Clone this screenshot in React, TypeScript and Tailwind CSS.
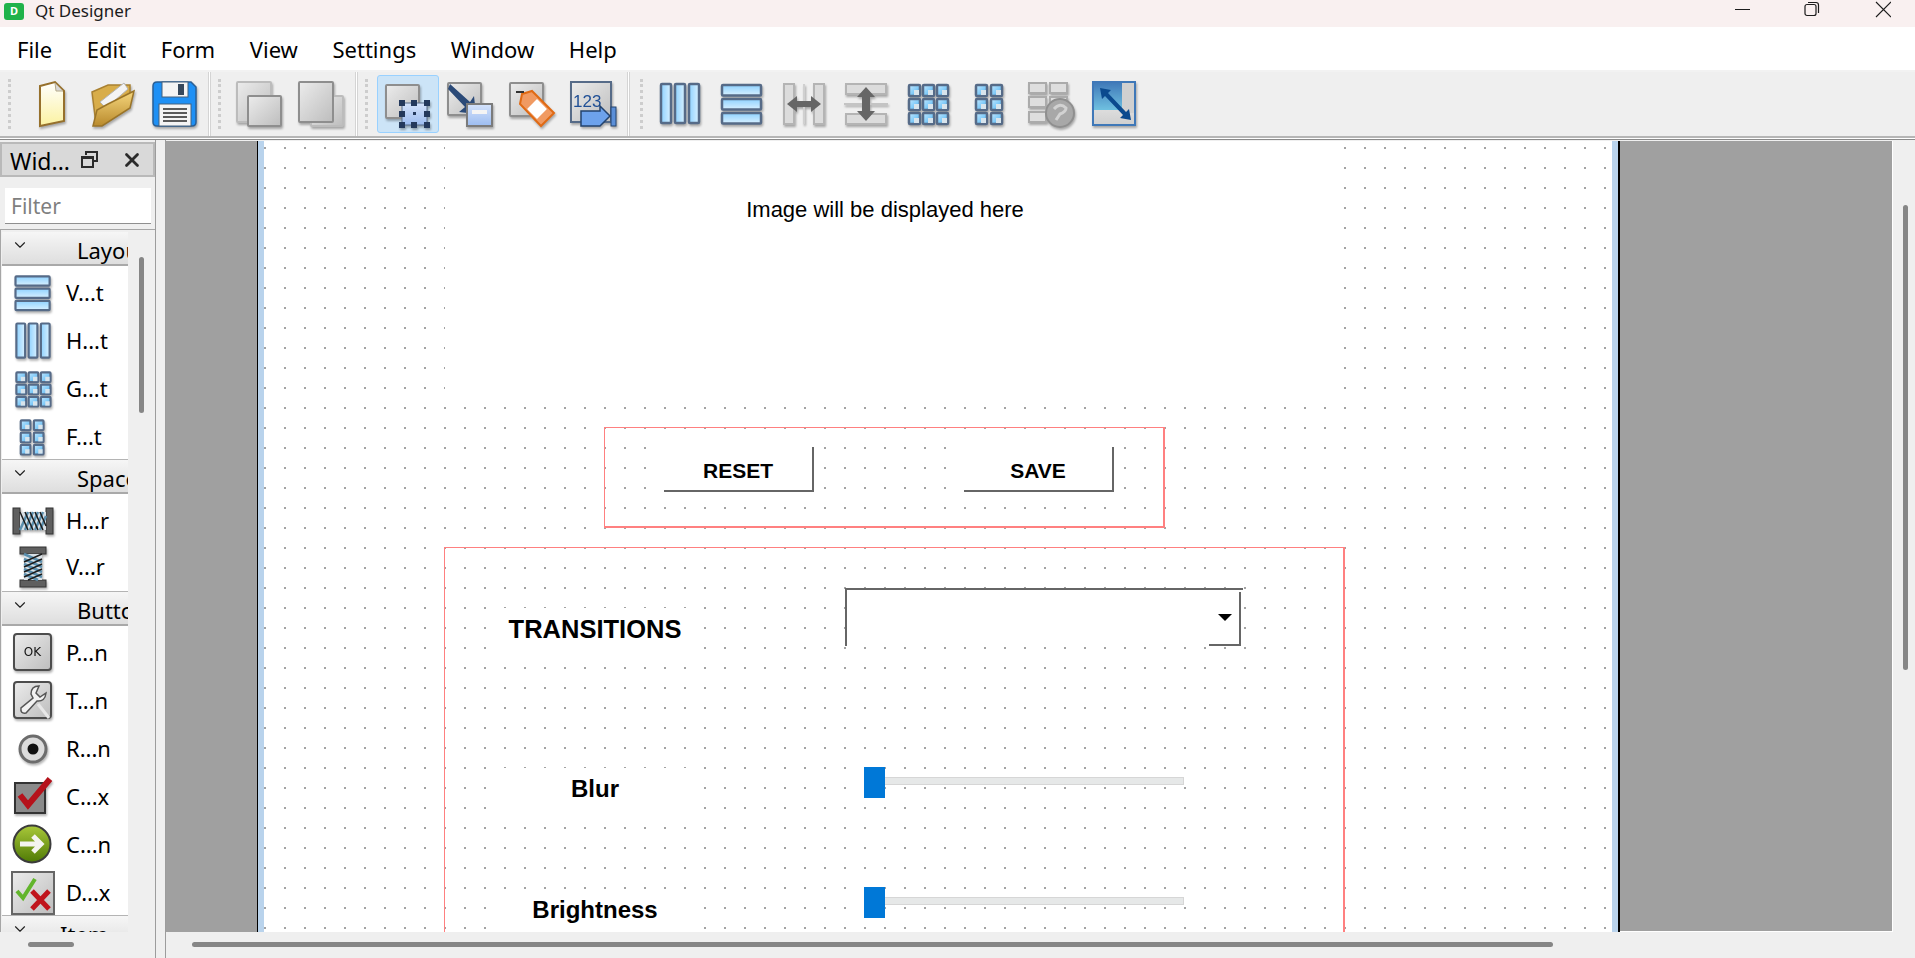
// App.tsx — Qt Designer main window with a form open on the canvas
import type { ReactNode } from "react";
import { ChevronDown, X } from "lucide-react";

// ─── Shared gradients for the toolbar and widget box icons ─────────────────────

function IconDefs() {
  return (
    <svg className="absolute w-0 h-0" aria-hidden="true">
      <defs>
        <linearGradient id="blueV" x1="0" y1="0" x2="0" y2="1">
          <stop offset="0" stopColor="#8fd2ff" />
          <stop offset="1" stopColor="#d8f0ff" />
        </linearGradient>
        <linearGradient id="blueH" x1="0" y1="0" x2="1" y2="0">
          <stop offset="0" stopColor="#8fd2ff" />
          <stop offset="1" stopColor="#d8f0ff" />
        </linearGradient>
        <linearGradient id="blueD" x1="0" y1="0" x2="1" y2="1">
          <stop offset="0" stopColor="#c4e8ff" />
          <stop offset="0.5" stopColor="#86cdf9" />
          <stop offset="1" stopColor="#4aa3df" />
        </linearGradient>
        <linearGradient id="grayBox" x1="0" y1="0" x2="1" y2="1">
          <stop offset="0" stopColor="#ececec" />
          <stop offset="1" stopColor="#bdbdbd" />
        </linearGradient>
        <linearGradient id="paleBlue" x1="0" y1="0" x2="0" y2="1">
          <stop offset="0" stopColor="#d5e3fb" />
          <stop offset="1" stopColor="#9cbcf0" />
        </linearGradient>
        <linearGradient id="paper" x1="0" y1="0" x2="0" y2="1">
          <stop offset="0" stopColor="#ffffff" />
          <stop offset="1" stopColor="#fbf2a0" />
        </linearGradient>
        <linearGradient id="folder" x1="0" y1="0" x2="0" y2="1">
          <stop offset="0" stopColor="#f6d77e" />
          <stop offset="1" stopColor="#b98a2c" />
        </linearGradient>
        <linearGradient id="greenBall" x1="0" y1="0" x2="0" y2="1">
          <stop offset="0" stopColor="#a9c83a" />
          <stop offset="1" stopColor="#4f7a05" />
        </linearGradient>
        <linearGradient id="adjust" x1="0" y1="0" x2="0" y2="1">
          <stop offset="0" stopColor="#3f78b8" />
          <stop offset="0.65" stopColor="#6fc0e0" />
          <stop offset="0.66" stopColor="#dcdcdc" />
          <stop offset="1" stopColor="#cfcfcf" />
        </linearGradient>
      </defs>
    </svg>
  );
}

function Icon({ size = 48, children }: { size?: number; children: ReactNode }) {
  return (
    <svg
      width={size}
      height={size}
      viewBox="0 0 48 48"
      className="shrink-0 drop-shadow-[1px_2px_1px_rgba(0,0,0,0.3)]"
    >
      {children}
    </svg>
  );
}

const OUTLINE = "#566b88";

// ─── File icons ────────────────────────────────────────────────────────────────

const NewFileIcon = () => (
  <Icon>
    <path d="M14 6 L29 2 L38 11 L38 41 L14 46 Z" fill="url(#paper)" stroke="#96702c" strokeWidth="2" />
    <path d="M29 3 L30 11 L37 11" fill="#d9d9d9" stroke="#b4a888" strokeWidth="1" />
  </Icon>
);

const OpenFileIcon = () => (
  <Icon>
    <path d="M4 12 L20 5 L42 5 L42 26 L8 44 Z" fill="#d8ad4a" stroke="#a98132" strokeWidth="1.5" />
    <path d="M12 22 L36 3 L40 9 L18 28 Z" fill="#f4f4f4" stroke="#b5b5b5" strokeWidth="1" />
    <path d="M5 46 L9 30 L20 24 L46 11 L42 28 L14 46 Z" fill="url(#folder)" stroke="#9a7428" strokeWidth="1.5" />
  </Icon>
);

const SaveIcon = () => (
  <Icon>
    <path d="M3 6 Q3 2 7 2 L41 2 L46 7 L46 42 Q46 46 42 46 L7 46 Q3 46 3 42 Z" fill="#1e90f5" stroke="#2a5f95" strokeWidth="1.5" />
    <rect x="12" y="2" width="26" height="15" fill="#f4f4f4" stroke="#44607c" />
    <rect x="28" y="4" width="6" height="11" fill="#36485c" />
    <rect x="9" y="24" width="32" height="22" fill="#f4f4f4" stroke="#44607c" />
    <path d="M13 29 H37 M13 33 H37 M13 37 H37 M13 41 H37" stroke="#5a5a5a" strokeWidth="2" />
  </Icon>
);

// ─── Form editing mode icons ───────────────────────────────────────────────────

function GrayBox({ x, y, w, h, light = false }: { x: number; y: number; w: number; h: number; light?: boolean }) {
  return (
    <rect
      x={x}
      y={y}
      width={w}
      height={h}
      rx="1"
      fill="url(#grayBox)"
      stroke={light ? "#bcbcbc" : "#8e8e8e"}
      strokeWidth="2"
    />
  );
}

const BringFrontIcon = () => (
  <Icon>
    <GrayBox x={2} y={2} w={34} h={40} light />
    <GrayBox x={13} y={16} w={33} h={30} />
  </Icon>
);

const SendBackIcon = () => (
  <Icon>
    <GrayBox x={14} y={16} w={32} h={30} light />
    <GrayBox x={2} y={2} w={34} h={40} />
  </Icon>
);

function EditWidgetsIcon() {
  const handles = [
    [18, 23], [30, 23], [43, 23],
    [18, 34], [43, 34],
    [18, 45], [30, 45], [43, 45],
  ];
  return (
    <Icon>
      <GrayBox x={2} y={5} w={33} h={33} />
      <rect x="18" y="23" width="25" height="22" fill="url(#paleBlue)" stroke={OUTLINE} />
      {handles.map(([x, y], i) => (
        <rect key={i} x={x - 3} y={y - 3} width="6" height="6" fill="#24395c" />
      ))}
      <rect x="29" y="32" width="3" height="3" fill="#24395c" />
    </Icon>
  );
}

const SignalsIcon = () => (
  <Icon>
    <GrayBox x={2} y={3} w={33} h={32} />
    <path d="M4 4 L24 22 L28 16 L30 34 L13 32 L19 27 L2 9 Z" fill="#2b4a78" />
    <rect x="21" y="24" width="25" height="22" fill="url(#paleBlue)" stroke="#7b7b7b" strokeWidth="2" />
    <rect x="26" y="30" width="15" height="4" fill="#f4f4f4" />
  </Icon>
);

const BuddiesIcon = () => (
  <Icon>
    <GrayBox x={2} y={3} w={33} h={33} />
    <path d="M14 14 L24 11 L46 33 L33 46 L12 24 Z" fill="#f09a62" stroke="#e06a14" strokeWidth="2" />
    <rect x="22" y="22" width="14" height="14" transform="rotate(45 29 29)" fill="#ffffff" />
    <path d="M8 12 H16" stroke="#333" strokeWidth="2" />
  </Icon>
);

const TabOrderIcon = () => (
  <Icon>
    <rect x="1" y="2" width="40" height="40" fill="url(#grayBox)" stroke={OUTLINE} strokeWidth="2" />
    <text x="3" y="27" fontFamily="Liberation Sans, sans-serif" fontSize="17" fill="#1f4f96">123</text>
    <path d="M11 31 H30 V26 L40 36 L30 46 H11 Z" fill="#6da2ec" stroke="#23436e" strokeWidth="1.5" />
    <rect x="41" y="27" width="5" height="19" fill="#5b8fd8" stroke="#23436e" />
  </Icon>
);

// ─── Layout icons, used in the toolbar and in the widget box ───────────────────

function VLayoutIcon({ size = 48 }: { size?: number }) {
  return (
    <Icon size={size}>
      {[5, 19, 33].map((y) => (
        <rect key={y} x="4" y={y} width="39" height="10.5" rx="1" fill="url(#blueV)" stroke={OUTLINE} strokeWidth="2.5" />
      ))}
    </Icon>
  );
}

function HLayoutIcon({ size = 48 }: { size?: number }) {
  return (
    <Icon size={size}>
      {[5, 19, 33].map((x) => (
        <rect key={x} x={x} y="4" width="10" height="39" rx="1" fill="url(#blueH)" stroke={OUTLINE} strokeWidth="2.5" />
      ))}
    </Icon>
  );
}

function Cell({ x, y }: { x: number; y: number }) {
  return (
    <g>
      <rect x={x} y={y} width="11" height="11" rx="1" fill="url(#blueD)" stroke={OUTLINE} strokeWidth="2.5" />
      <rect x={x + 5} y={y + 5} width="5" height="5" fill="#d8e4ec" />
    </g>
  );
}

function GridIcon({ size = 48 }: { size?: number }) {
  const pos = [5, 19, 33];
  return (
    <Icon size={size}>
      {pos.map((y) => pos.map((x) => <Cell key={`${x}-${y}`} x={x} y={y} />))}
    </Icon>
  );
}

function FormLayoutIcon({ size = 48 }: { size?: number }) {
  const pos = [5, 19, 33];
  return (
    <Icon size={size}>
      {pos.map((y) => [10, 25].map((x) => <Cell key={`${x}-${y}`} x={x} y={y} />))}
    </Icon>
  );
}

const HSplitterIcon = () => (
  <Icon>
    <rect x="4" y="4" width="10" height="40" fill="#dcdcdc" stroke="#b4b4b4" strokeWidth="2" />
    <rect x="34" y="4" width="10" height="40" fill="#dcdcdc" stroke="#b4b4b4" strokeWidth="2" />
    <path d="M24 4 V44" stroke="#d0d0d0" strokeWidth="2" />
    <path d="M7 24 L17 16 V21 H31 V16 L41 24 L31 32 V27 H17 V32 Z" fill="#666" />
  </Icon>
);

const VSplitterIcon = () => (
  <Icon>
    <rect x="4" y="4" width="40" height="10" fill="#dcdcdc" stroke="#b4b4b4" strokeWidth="2" />
    <rect x="4" y="34" width="40" height="10" fill="#dcdcdc" stroke="#b4b4b4" strokeWidth="2" />
    <path d="M2 24 H46" stroke="#c4c4c4" strokeWidth="2" />
    <path d="M24 7 L33 17 H28 V31 H33 L24 41 L15 31 H20 V17 H15 Z" fill="#666" />
  </Icon>
);

const BreakLayoutIcon = () => (
  <Icon>
    {[3, 17, 32].map((y) => (
      <g key={y}>
        <rect x="1" y={y} width="17" height="10" fill="#dedede" stroke="#ababab" strokeWidth="2" />
        <rect x="22" y={y} width="17" height="10" fill="#dedede" stroke="#ababab" strokeWidth="2" />
      </g>
    ))}
    <circle cx="32" cy="33" r="14" fill="#a8a8a8" stroke="#8f8f8f" strokeWidth="2" />
    <path d="M26 29 Q32 22 38 28 Q38 32 32 34 L28 40" fill="none" stroke="#d2d2d2" strokeWidth="3" />
  </Icon>
);

const AdjustSizeIcon = () => (
  <Icon>
    <rect x="3" y="2" width="42" height="43" fill="url(#adjust)" stroke="#3f78b8" strokeWidth="2" />
    <rect x="32" y="3" width="12" height="30" fill="#d0d0d0" />
    <path d="M10 8 L21 10 L18 13 L36 32 L39 29 L41 40 L30 38 L33 35 L15 16 L12 19 Z" fill="#0b4a8e" />
  </Icon>
);

// ─── Widget box icons ──────────────────────────────────────────────────────────

function CoilIcon({ vertical = false }: { vertical?: boolean }) {
  return (
    <svg width="42" height="42" viewBox="0 0 42 42" className="shrink-0 drop-shadow-[1px_2px_1px_rgba(0,0,0,0.3)]">
      <g transform={vertical ? "rotate(90 21 21)" : undefined}>
        <rect x="1" y="8" width="7" height="26" fill="#5f5f5f" stroke="#333" />
        <rect x="34" y="8" width="7" height="26" fill="#5f5f5f" stroke="#333" />
        <rect x="8" y="12" width="26" height="18" fill="#d8e0e6" />
        <path d="M8 30 L16 12 M13 30 L21 12 M18 30 L26 12 M23 30 L31 12 M28 30 L34 16" stroke="#5a8fae" strokeWidth="2.5" />
        <path d="M8 12 L16 30 M13 12 L21 30 M18 12 L26 30 M23 12 L31 30 M28 12 L34 26" stroke="#1c1c1c" strokeWidth="1.5" />
      </g>
    </svg>
  );
}

const PushButtonIcon = () => (
  <svg width="42" height="42" viewBox="0 0 42 42" className="shrink-0 drop-shadow-[1px_2px_1px_rgba(0,0,0,0.3)]">
    <rect x="2" y="2" width="37" height="36" rx="3" fill="url(#grayBox)" stroke="#4d4d4d" strokeWidth="2" />
    <text x="20.5" y="24" textAnchor="middle" fontFamily="DejaVu Sans, sans-serif" fontSize="12" fill="#111">OK</text>
  </svg>
);

const ToolButtonIcon = () => (
  <svg width="42" height="42" viewBox="0 0 42 42" className="shrink-0 drop-shadow-[1px_2px_1px_rgba(0,0,0,0.3)]">
    <rect x="2" y="2" width="37" height="36" rx="3" fill="url(#grayBox)" stroke="#4d4d4d" strokeWidth="2" />
    <path d="M27 6 Q19 6 19 14 L21 18 L9 28 Q8 34 14 33 L25 21 Q33 22 34 13 L28 17 L24 13 Z" fill="#f2f2f2" stroke="#555" strokeWidth="1.5" />
    <path d="M26 24 L37 38" stroke="#e8e8e8" strokeWidth="3" />
  </svg>
);

const RadioIcon = () => (
  <svg width="42" height="42" viewBox="0 0 42 42" className="shrink-0 drop-shadow-[1px_2px_1px_rgba(0,0,0,0.3)]">
    <circle cx="21" cy="21" r="13" fill="#dcdcdc" stroke="#6c6c6c" strokeWidth="3" />
    <circle cx="21" cy="21" r="5.5" fill="#111" />
  </svg>
);

const CheckBoxIcon = () => (
  <svg width="42" height="42" viewBox="0 0 42 42" className="shrink-0 drop-shadow-[1px_2px_1px_rgba(0,0,0,0.3)]">
    <rect x="3" y="7" width="30" height="30" fill="#8a8a8a" stroke="#333" strokeWidth="2" />
    <path d="M8 19 L16 29 L38 3" fill="none" stroke="#b5121b" strokeWidth="6" />
  </svg>
);

const CommandLinkIcon = () => (
  <svg width="42" height="42" viewBox="0 0 42 42" className="shrink-0">
    <circle cx="20" cy="20" r="18.5" fill="url(#greenBall)" stroke="#3b3b3b" strokeWidth="2" />
    <path d="M8 20 H28 M21 12 L29 20 L21 28" fill="none" stroke="#f4f4f0" strokeWidth="5" />
  </svg>
);

const DialogBoxIcon = () => (
  <svg width="44" height="44" viewBox="0 0 44 44" className="shrink-0">
    <rect x="1" y="1" width="42" height="42" fill="url(#grayBox)" stroke="#666" strokeWidth="2" />
    <path d="M6 20 L12 27 L24 8" fill="none" stroke="#62b52c" strokeWidth="4" />
    <path d="M21 20 L38 38 M38 20 L21 38" stroke="#c0141c" strokeWidth="5" />
  </svg>
);

// ─── Title bar and menu ────────────────────────────────────────────────────────

const MENUS = ["File", "Edit", "Form", "View", "Settings", "Window", "Help"];

function TitleBar() {
  return (
    <div className="h-[27px] bg-[#f9f0f0] flex items-center shrink-0">
      <div className="ml-[4px] w-[20px] h-[17px] mb-[4px] rounded-[3px] bg-[#20b24a] text-white text-[11px] font-bold flex items-center justify-center">
        D
      </div>
      <span className="ml-[11px] mb-[5px] text-[17px] text-[#1c1c1c]">Qt Designer</span>
      <div className="ml-auto flex items-start h-full pr-[24px] text-[#1c1c1c]">
        <svg width="16" height="20" viewBox="0 0 16 20">
          <path d="M0 9.5 H15" stroke="currentColor" strokeWidth="1" />
        </svg>
        <svg width="16" height="20" viewBox="0 0 16 20" className="ml-[53px]">
          <rect x="1" y="4.5" width="11" height="11" rx="2" fill="none" stroke="currentColor" strokeWidth="1.2" />
          <path d="M4 2.5 H12 Q14.5 2.5 14.5 5 V13" fill="none" stroke="currentColor" strokeWidth="1.2" />
        </svg>
        <svg width="16" height="20" viewBox="0 0 16 20" className="ml-[55px]">
          <path d="M1 2 L16 17 M16 2 L1 17" stroke="currentColor" strokeWidth="1.1" />
        </svg>
      </div>
    </div>
  );
}

function MenuBar() {
  return (
    <div className="h-[45px] bg-white border-b-2 border-[#f2f2f2] flex items-center gap-[34.6px] pl-[17px] pt-[2px] text-[22px] text-black shrink-0">
      {MENUS.map((m) => (
        <span key={m}>{m}</span>
      ))}
    </div>
  );
}

// ─── Toolbar ───────────────────────────────────────────────────────────────────

function ToolSlot({ active = false, children }: { active?: boolean; children: ReactNode }) {
  return (
    <div
      className={
        active
          ? "w-[62px] h-[58px] flex items-center justify-center rounded-[3px] bg-[#cce4f7] border border-[#99d1ff]"
          : "w-[62px] h-[58px] flex items-center justify-center"
      }
    >
      {children}
    </div>
  );
}

const Grip = () => <div className="w-[3px] h-[50px] border-l-[3px] border-dotted border-[#cdcdcd]" />;
const ToolDivider = () => <div className="w-[3px] h-full bg-white border-x border-[#d4d4d4]" />;

function ToolBar() {
  return (
    <div className="h-[64px] bg-[#efefef] flex items-center shrink-0">
      <div className="flex items-center pl-[8px] pr-[3px]">
        <Grip />
        <div className="flex ml-[8px]">
          <ToolSlot><NewFileIcon /></ToolSlot>
          <ToolSlot><OpenFileIcon /></ToolSlot>
          <ToolSlot><SaveIcon /></ToolSlot>
        </div>
      </div>
      <ToolDivider />
      <div className="flex items-center pl-[7px] pr-[3px]">
        <Grip />
        <div className="flex ml-[7px]">
          <ToolSlot><BringFrontIcon /></ToolSlot>
          <ToolSlot><SendBackIcon /></ToolSlot>
        </div>
      </div>
      <ToolDivider />
      <div className="flex items-center pl-[7px] pr-[2px]">
        <Grip />
        <div className="flex ml-[9px]">
          <ToolSlot active><EditWidgetsIcon /></ToolSlot>
          <ToolSlot><SignalsIcon /></ToolSlot>
          <ToolSlot><BuddiesIcon /></ToolSlot>
          <ToolSlot><TabOrderIcon /></ToolSlot>
        </div>
      </div>
      <ToolDivider />
      <div className="flex items-center pl-[10px]">
        <Grip />
        <div className="flex ml-[6px]">
          <ToolSlot><HLayoutIcon /></ToolSlot>
          <ToolSlot><VLayoutIcon /></ToolSlot>
          <ToolSlot><HSplitterIcon /></ToolSlot>
          <ToolSlot><VSplitterIcon /></ToolSlot>
          <ToolSlot><GridIcon /></ToolSlot>
          <ToolSlot><FormLayoutIcon /></ToolSlot>
          <ToolSlot><BreakLayoutIcon /></ToolSlot>
          <ToolSlot><AdjustSizeIcon /></ToolSlot>
        </div>
      </div>
    </div>
  );
}

// ─── Widget box dock ───────────────────────────────────────────────────────────

function SectionHeader({ title, pad = "pl-[75px]" }: { title: string; pad?: string }) {
  return (
    <div className="relative h-[34px] shrink-0 flex items-center overflow-hidden whitespace-nowrap bg-gradient-to-b from-[#f6f6f6] to-[#dedede] border-b-2 border-[#a9a9a9]">
      <ChevronDown className="ml-[9px] mb-[6px] shrink-0" size={18} strokeWidth={1.5} color="#222" />
      <span className={`absolute ${pad} pt-[4px] text-[22px] text-black`}>{title}</span>
    </div>
  );
}

function BoxRow({ icon, label, tall = true }: { icon: ReactNode; label: string; tall?: boolean }) {
  return (
    <div className={tall ? "h-[48px] flex items-center" : "h-[46px] flex items-center"}>
      <div className="w-[60px] flex items-center justify-center pl-[2px]">{icon}</div>
      <span className="ml-[4px] pb-[2px] text-[22px] text-black">{label}</span>
    </div>
  );
}

function WidgetBox() {
  return (
    <aside className="w-[166px] shrink-0 bg-[#efefef] border-r border-[#9c9c9c] flex flex-col">
      <div className="w-[156px] flex-1 flex flex-col border-r border-[#9c9c9c] min-h-0">
        <div className="mt-[2px] w-[155px] h-[35px] shrink-0 bg-[#d9d9d9] border-2 border-[#b9b9b9] flex items-center">
          <span className="ml-[8px] pt-[3px] text-[23px] text-black">Wid...</span>
          <svg width="17" height="17" viewBox="0 0 17 17" className="ml-[11px]">
            <path d="M5 4 V1 H16 V10 H12" fill="none" stroke="#2b2b2b" strokeWidth="2" />
            <rect x="1" y="6" width="11" height="10" fill="none" stroke="#2b2b2b" strokeWidth="2" />
            <path d="M1 7 H12" stroke="#2b2b2b" strokeWidth="2" />
          </svg>
          <X className="ml-[23px]" size={22} strokeWidth={3} color="#2b2b2b" />
        </div>
        <div className="mt-[11px] ml-[5px] w-[146px] h-[36px] shrink-0 bg-white border-b border-[#8f8f8f] flex items-center pl-[6px] pt-[3px] text-[21px] text-[#7f7f7f]">
          Filter
        </div>
        <div className="mt-[5px] h-[703px] shrink-0 overflow-hidden flex border border-r-0 border-b-0 border-[#a6a6a6] pt-[2px] pl-[1px]">
          <div className="w-[126px] shrink-0 overflow-hidden flex flex-col">
            <SectionHeader title="Layouts" />
            <div className="h-[194px] shrink-0 overflow-hidden bg-white border-b border-[#b4b4b4] pt-[3px]">
              <BoxRow icon={<VLayoutIcon size={42} />} label="V...t" />
              <BoxRow icon={<HLayoutIcon size={42} />} label="H...t" />
              <BoxRow icon={<GridIcon size={42} />} label="G...t" />
              <BoxRow icon={<FormLayoutIcon size={42} />} label="F...t" />
            </div>
            <SectionHeader title="Spacers" />
            <div className="h-[98px] shrink-0 overflow-hidden bg-white border-b border-[#b4b4b4] pt-[4px]">
              <BoxRow tall={false} icon={<CoilIcon />} label="H...r" />
              <BoxRow tall={false} icon={<CoilIcon vertical />} label="V...r" />
            </div>
            <SectionHeader title="Buttons" />
            <div className="h-[290px] shrink-0 overflow-hidden bg-white border-b border-[#b4b4b4] pt-[3px]">
              <BoxRow icon={<PushButtonIcon />} label="P...n" />
              <BoxRow icon={<ToolButtonIcon />} label="T...n" />
              <BoxRow icon={<RadioIcon />} label="R...n" />
              <BoxRow icon={<CheckBoxIcon />} label="C...x" />
              <BoxRow icon={<CommandLinkIcon />} label="C...n" />
              <BoxRow icon={<DialogBoxIcon />} label="D...x" />
            </div>
            <SectionHeader title="Item" pad="pl-[58px]" />
          </div>
          <div className="flex-1 flex justify-center pt-[25px]">
            <div className="w-[5px] h-[156px] rounded-full bg-[#868686]" />
          </div>
        </div>
        <div className="flex-1 pl-[28px] pt-[10px]">
          <div className="w-[46px] h-[5px] rounded-full bg-[#868686]" />
        </div>
      </div>
    </aside>
  );
}

// ─── Form canvas ───────────────────────────────────────────────────────────────

function Slider({ top }: { top: string }) {
  return (
    <div className={`absolute left-[600px] ${top} w-[320px] h-[31px]`}>
      <div className="absolute left-0 right-0 top-[10px] h-[8px] bg-[#e6e8e8] border border-[#d6d6d6]" />
      <div className="absolute left-0 top-0 w-[21px] h-[31px] bg-[#0078d7]" />
    </div>
  );
}

function FormLabel({ text, top, size = "text-[24px]" }: { text: string; top: string; size?: string }) {
  return (
    <div className={`absolute left-[239px] ${top} w-[200px] h-[42px] bg-white flex items-center justify-center pr-[16px] font-bold ${size} text-black`}>
      {text}
    </div>
  );
}

function PushButton({ text, left }: { text: string; left: string }) {
  return (
    <div className={`absolute ${left} top-[306px] w-[150px] h-[45px] bg-white border-r-2 border-b-2 border-[#666] flex items-center justify-center pt-[4px] font-bold text-[21px] text-black`}>
      {text}
    </div>
  );
}

function FormCanvas() {
  return (
    <div
      className="relative flex-1 h-full overflow-hidden bg-white bg-[conic-gradient(from_270deg_at_2px_2px,#a3a3a3_25%,transparent_0)] bg-[size:20px_20px] bg-[position:0_6px]"
      style={{ fontFamily: '"Liberation Sans", Arial, sans-serif' }}
    >
      {/* Image label covers the grid */}
      <div className="absolute left-[181px] top-0 w-[898px] h-[262px] bg-white text-[22px] text-black flex justify-center pr-[18px] pt-[52px]">
        Image will be displayed here
      </div>

      {/* Button row */}
      <div className="absolute left-[340px] top-[286px] w-[561px] h-[101px] border border-r-2 border-b-2 border-[#ff8080]" />
      <PushButton text="RESET" left="left-[400px]" />
      <PushButton text="SAVE" left="left-[700px]" />

      {/* Controls group */}
      <div className="absolute left-[180px] top-[406px] w-[901px] h-[500px] border border-r-2 border-[#ff8080]" />
      <FormLabel text="TRANSITIONS" top="top-[467px]" size="text-[25.5px]" />
      <div className="absolute left-[581px] top-[447px] w-[398px] h-[58px] bg-white border-l-2 border-t-2 border-[#666]">
        <div className="absolute right-[2px] top-[2px] bottom-0 w-[32px] border-r-2 border-b-2 border-[#666] flex items-center justify-center">
          <div className="mb-[2px] ml-[2px] border-x-[7px] border-x-transparent border-t-[7px] border-t-black" />
        </div>
      </div>
      <FormLabel text="Blur" top="top-[627px]" />
      <Slider top="top-[626px]" />
      <FormLabel text="Brightness" top="top-[748px]" />
      <Slider top="top-[746px]" />
    </div>
  );
}

function CanvasArea() {
  return (
    <div className="flex-1 min-w-0 flex flex-col pt-[1px]">
      <div className="h-[791px] shrink-0 flex">
        <div className="w-[91px] shrink-0 bg-[#a0a0a0]" />
        <div className="w-[1px] shrink-0 bg-black" />
        <div className="w-[6px] shrink-0 bg-[#b9d3ec]" />
        <FormCanvas />
        <div className="w-[6px] shrink-0 bg-[#b9d3ec]" />
        <div className="w-[2px] shrink-0 bg-black" />
        <div className="w-[272px] shrink-0 bg-[#a0a0a0] border-b border-white" />
        <div className="w-[1px] shrink-0 bg-white" />
        <div className="w-[22px] shrink-0 bg-[#efefef] pl-[10px] pt-[64px]">
          <div className="w-[5px] h-[465px] rounded-full bg-[#868686]" />
        </div>
      </div>
      <div className="flex-1 bg-[#efefef] pl-[26px] pt-[10px]">
        <div className="w-[1361px] h-[5px] rounded-full bg-[#868686]" />
      </div>
    </div>
  );
}

// ─── Page ──────────────────────────────────────────────────────────────────────

export default function App() {
  return (
    <div
      className="w-[1915px] h-[958px] overflow-hidden flex flex-col bg-[#efefef]"
      style={{ fontFamily: '"Noto Sans", "Open Sans", sans-serif' }}
    >
      <IconDefs />
      <TitleBar />
      <MenuBar />
      <ToolBar />
      <div className="h-[4px] shrink-0 flex flex-col">
        <div className="h-[2px] bg-[#b5b5b5]" />
        <div className="h-[1px] bg-white" />
        <div className="h-[1px] bg-[#8a8a8a]" />
      </div>
      <div className="flex-1 min-h-0 flex">
        <WidgetBox />
        <CanvasArea />
      </div>
    </div>
  );
}
